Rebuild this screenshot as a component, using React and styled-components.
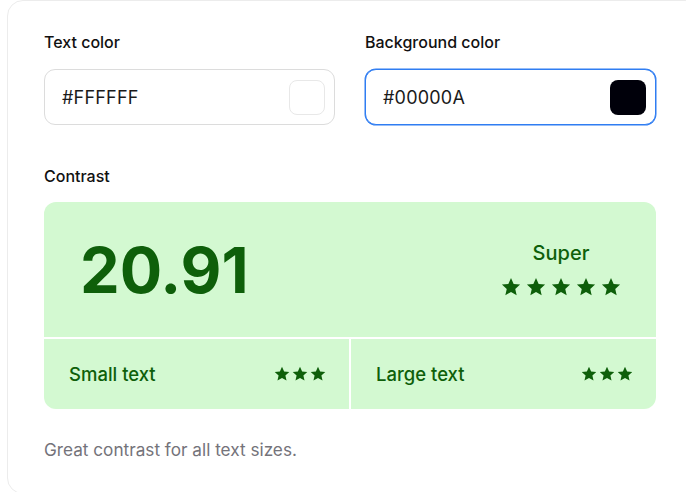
import React from 'react'
import styled, { createGlobalStyle } from 'styled-components'

const GlobalStyle = createGlobalStyle`
  html, body {
    margin: 0;
    padding: 0;
    background: #ffffff;
    overflow: hidden;
  }
  body {
    font-family: Inter, "Noto Sans", sans-serif;
    color: #111111;
  }
`

const Card = styled.div`
  box-sizing: border-box;
  margin-left: 7px;
  width: 694px;
  height: 494px;
  border: 1px solid #ececec;
  border-radius: 16px;
  padding: 31px 36px 0 36px;
`

const Content = styled.div`
  width: 612px;
`

const Pickers = styled.div`
  display: grid;
  grid-template-columns: 1fr 1fr;
  column-gap: 30px;
`

const Field = styled.div`
  display: flex;
  flex-direction: column;
`

const Label = styled.div`
  font-size: 16px;
  font-weight: 500;
  line-height: 20px;
  color: #111111;
  margin-bottom: 17px;
`

const InputBox = styled.div`
  box-sizing: border-box;
  height: 56px;
  display: flex;
  align-items: center;
  justify-content: space-between;
  padding: 0 9px 0 17px;
  border: 1px solid ${(p) => (p.$focused ? '#2f7df2' : '#dcdcdc')};
  box-shadow: ${(p) => (p.$focused ? '0 0 0 0.5px #2f7df2' : 'none')};
  border-radius: 11px;
  background: #ffffff;
`

const HexText = styled.span`
  font-size: 18px;
  color: #1a1a1a;
  letter-spacing: 0.2px;
`

const Swatch = styled.span`
  box-sizing: border-box;
  width: 36px;
  height: 35px;
  border-radius: 8px;
  background: ${(p) => p.$color};
  border: ${(p) => (p.$bordered ? '1px solid #e8e8e8' : 'none')};
`

const ContrastLabel = styled(Label)`
  margin-top: 41px;
  margin-bottom: 16px;
`

const Panel = styled.div`
  display: grid;
  grid-template-columns: 1fr 1fr;
  gap: 2px;
  border-radius: 12px;
  overflow: hidden;
`

const Cell = styled.div`
  background: #d3f9d1;
  color: #0e5f0a;
  display: flex;
  align-items: center;
  justify-content: space-between;
`

const ScoreCell = styled(Cell)`
  grid-column: 1 / span 2;
  height: 135px;
  padding: 0 35px 0 36px;
`

const Ratio = styled.div`
  font-size: 63px;
  font-weight: 700;
  line-height: 1;
  padding-top: 2px;
`

const Rating = styled.div`
  display: flex;
  flex-direction: column;
  align-items: center;
  gap: 12px;
  padding-bottom: 2px;
`

const RatingName = styled.div`
  font-size: 20px;
  font-weight: 500;
  line-height: 24px;
`

const SizeCell = styled(Cell)`
  height: 70px;
  padding: 0 23px 0 25px;
`

const SizeName = styled.span`
  font-size: 18.5px;
  font-weight: 500;
`

const Stars = styled.div`
  display: flex;
  gap: ${(p) => p.$gap}px;
`

const Footer = styled.p`
  margin: 29px 0 0;
  font-size: 17.2px;
  line-height: 24px;
  color: #74737a;
`

function Star({ size }) {
  return (
    <svg width={size} height={size} viewBox="0 0 24 24" aria-hidden="true">
      <path
        fill="#0e5f0a"
        d="M12 1.2l3.2 7.1 7.7.8-5.8 5.2 1.7 7.6L12 17.9l-6.8 4 1.7-7.6-5.8-5.2 7.7-.8z"
      />
    </svg>
  )
}

function StarRow({ count, size, gap }) {
  return (
    <Stars $gap={gap}>
      {[...Array(count)].map((_, i) => <Star key={i} size={size} />)}
    </Stars>
  )
}

export default function App() {
  return (
    <>
      <GlobalStyle />
      <Card>
        <Content>
          <Pickers>
            <Field>
              <Label>Text color</Label>
              <InputBox>
                <HexText>#FFFFFF</HexText>
                <Swatch $color="#FFFFFF" $bordered />
              </InputBox>
            </Field>
            <Field>
              <Label>Background color</Label>
              <InputBox $focused>
                <HexText>#00000A</HexText>
                <Swatch $color="#00000A" />
              </InputBox>
            </Field>
          </Pickers>

          <ContrastLabel>Contrast</ContrastLabel>
          <Panel>
            <ScoreCell>
              <Ratio>20.91</Ratio>
              <Rating>
                <RatingName>Super</RatingName>
                <StarRow count={5} size={20} gap={5} />
              </Rating>
            </ScoreCell>
            <SizeCell>
              <SizeName>Small text</SizeName>
              <StarRow count={3} size={16} gap={2} />
            </SizeCell>
            <SizeCell>
              <SizeName>Large text</SizeName>
              <StarRow count={3} size={16} gap={2} />
            </SizeCell>
          </Panel>

          <Footer>Great contrast for all text sizes.</Footer>
        </Content>
      </Card>
    </>
  )
}
